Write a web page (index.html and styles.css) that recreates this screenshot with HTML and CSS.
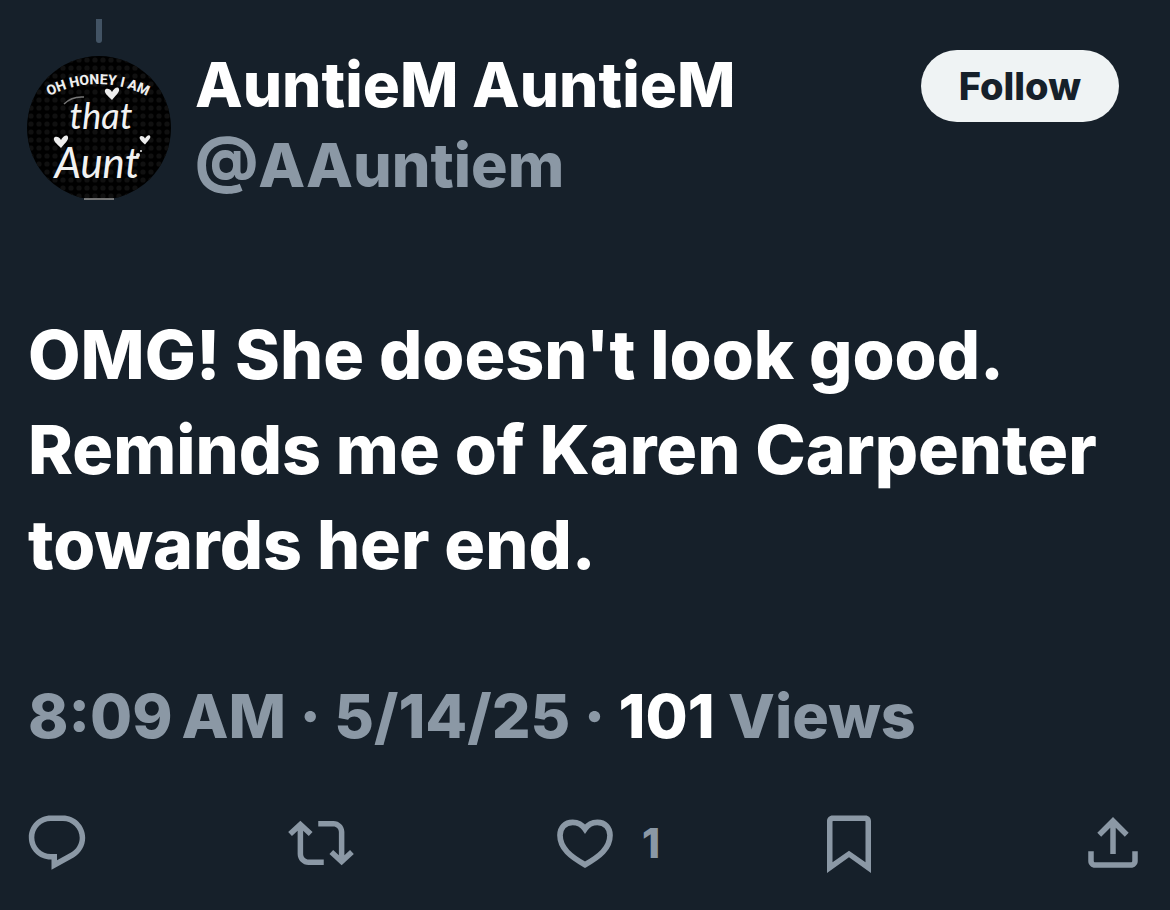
FILE: index.html
```html
<!DOCTYPE html>
<html lang="en">
<head>
<meta charset="utf-8">
<meta name="viewport" content="width=device-width, initial-scale=1">
<title>AuntieM AuntieM (@AAuntiem)</title>
<link rel="stylesheet" href="styles.css">
</head>
<body>
<article class="post">
  <div class="thread-line"></div>
  <header class="post-header">
    <a class="avatar" href="#" aria-label="AuntieM AuntieM">
      <svg viewBox="0 0 144 144">
        <defs>
          <pattern id="dots" width="8" height="8" patternUnits="userSpaceOnUse">
            <circle cx="4" cy="4" r="2.6" fill="#101010"/>
          </pattern>
          <path id="arc" d="M18 42Q71 14 124 42"/>
          <path id="heart" d="M0 6C-4 2-8-1-7-4C-6-6-2-6 0-2C2-6 6-8 7-5C8-2 3 2 0 6Z"/>
        </defs>
        <circle cx="72" cy="72" r="72" fill="#000"/>
        <circle cx="72" cy="72" r="72" fill="url(#dots)"/>
        <path d="M57 143H87" stroke="#999" stroke-width="1.5"/>
        <text class="avatar-caps"><textPath href="#arc" startOffset="50%" text-anchor="middle">OH HONEY I AM</textPath></text>
        <path d="M37 48Q45 40 57 41" stroke="#777" stroke-width="1.5" fill="none"/>
        <text class="avatar-script" x="74" y="73" text-anchor="middle">that</text>
        <text class="avatar-script avatar-script-large" x="70" y="122" text-anchor="middle">Aunt</text>
        <g fill="#eee">
          <use href="#heart" x="85" y="38"/>
          <use href="#heart" x="34" y="86"/>
          <use href="#heart" transform="translate(118 84) scale(.75)"/>
          <circle cx="111" cy="99" r="2"/>
          <circle cx="114" cy="95" r="1"/>
        </g>
      </svg>
    </a>
    <div class="names">
      <a class="name" href="#">AuntieM AuntieM</a>
      <a class="handle" href="#">@AAuntiem</a>
    </div>
    <button class="follow" type="button">Follow</button>
  </header>
  <p class="post-text">OMG! She doesn't look good. Reminds me of Karen Carpenter towards her end.</p>
  <p class="meta"><time>8:09&#8239;AM · 5/14/25</time> · <strong>101</strong> Views</p>
  <div class="actions">
    <button class="action" type="button" aria-label="Reply">
      <svg viewBox="0 0 24 24"><path d="M1.751 10c0-4.42 3.584-8 8.005-8h4.366c4.49 0 8.129 3.64 8.129 8.13 0 2.96-1.607 5.68-4.196 7.11l-8.054 4.46v-3.69h-.067c-4.49.1-8.183-3.51-8.183-8.01zm8.005-6c-3.317 0-6.005 2.69-6.005 6 0 3.37 2.77 6.08 6.138 6.01l.351-.01h1.761v2.3l5.087-2.81c1.951-1.08 3.163-3.13 3.163-5.36 0-3.39-2.744-6.13-6.129-6.13H9.756z"/></svg>
    </button>
    <button class="action" type="button" aria-label="Repost">
      <svg viewBox="0 0 24 24"><path d="M4.5 3.88l4.432 4.14-1.364 1.46L5.5 7.55V16c0 1.1.896 2 2 2H13v2H7.5c-2.209 0-4-1.79-4-4V7.55L1.432 9.48.068 8.02 4.5 3.88zM16.5 6H11V4h5.5c2.209 0 4 1.79 4 4v8.45l2.068-1.93 1.364 1.46-4.432 4.14-4.432-4.14 1.364-1.46 2.068 1.93V8c0-1.1-.896-2-2-2z"/></svg>
    </button>
    <button class="action" type="button" aria-label="Like, 1">
      <svg viewBox="66 60 198 198"><path fill="none" stroke="currentColor" stroke-width="17" d="M165 117C155 102 142 97 128 97C105 97 90 113 90 136C90 175 122 200 165 224C208 200 240 175 240 136C240 113 225 97 202 97C188 97 175 102 165 117Z"/></svg>
      <span class="count">1</span>
    </button>
    <button class="action" type="button" aria-label="Bookmark">
      <svg viewBox="0 0 24 24"><path d="M4 4C4 2.9 4.9 2 6 2h12c1.1 0 2 .9 2 2v18.9l-8-5.7-8 5.7V4zM6.2 4c-.1 0-.2.1-.2.2v14.8l6-4.2 6 4.2V4.2c0-.1-.1-.2-.2-.2H6.2z"/></svg>
    </button>
    <button class="action" type="button" aria-label="Share">
      <svg viewBox="0 0 24 24"><path d="M12 2.59l5.7 5.7-1.41 1.42L13 6.41V16h-2V6.41l-3.3 3.3-1.41-1.42L12 2.59zM21 15v3.5c0 1.38-1.12 2.5-2.5 2.5h-13C4.11 21 3 19.88 3 18.5V15h2v3.5c0 .28.22.5.5.5h13c.28 0 .5-.22.5-.5V15h2z"/></svg>
    </button>
  </div>
</article>
</body>
</html>
```
FILE: styles.css
```css
* {
  box-sizing: border-box;
}

body {
  margin: 0;
  background: #16202a;
  color: #fff;
  font-family: Inter, "Liberation Sans", sans-serif;
  font-weight: 800;
}

a {
  color: inherit;
  text-decoration: none;
}

button {
  border: 0;
  font: inherit;
  cursor: pointer;
}

.post {
  padding: 19px 24px 32px;
}

.thread-line {
  width: 6px;
  height: 24px;
  margin-left: 72px;
  border-radius: 0 0 3px 3px;
  background: #425364;
}

.post-header {
  display: flex;
  align-items: flex-start;
  padding: 1px 27px 0 3px;
}

.avatar {
  flex: none;
  width: 144px;
  height: 144px;
  margin-top: 12px;
}

.avatar svg {
  display: block;
  width: 100%;
  height: 100%;
}

.avatar-caps {
  fill: #eee;
  font-family: Roboto, sans-serif;
  font-size: 14px;
  font-weight: 800;
}

.avatar-script {
  fill: #f2f2f2;
  font-family: Lato, sans-serif;
  font-size: 36px;
  font-style: italic;
  font-weight: 400;
}

.avatar-script-large {
  font-size: 42px;
}

.names {
  display: flex;
  flex: 1;
  flex-direction: column;
  min-width: 0;
  margin-left: 24px;
  font-size: 62px;
  line-height: 81px;
}

.handle,
.meta {
  color: #8b98a5;
  font-size: 61px;
}

.follow {
  flex: none;
  height: 72px;
  margin-top: 6px;
  padding: 0 38px;
  border-radius: 36px;
  background: #eff3f4;
  color: #16202a;
  font-size: 38px;
}

.post-text {
  margin: 101px 0 0;
  padding: 0 4px;
  font-size: 68px;
  line-height: 95px;
}

.meta {
  margin: 84px 0 0;
  padding: 0 4px;
  line-height: 80px;
}

.meta strong {
  color: #fff;
  font-weight: 800;
}

.actions {
  display: grid;
  grid-template-columns: repeat(4, 1fr) auto;
  margin-top: 54px;
}

.action {
  display: flex;
  align-items: center;
  justify-self: start;
  gap: 24px;
  padding: 0;
  background: none;
  color: #8b98a5;
}

.action svg {
  width: 66px;
  height: 66px;
  fill: currentColor;
}

.count {
  font-size: 41px;
  line-height: 48px;
}
```
